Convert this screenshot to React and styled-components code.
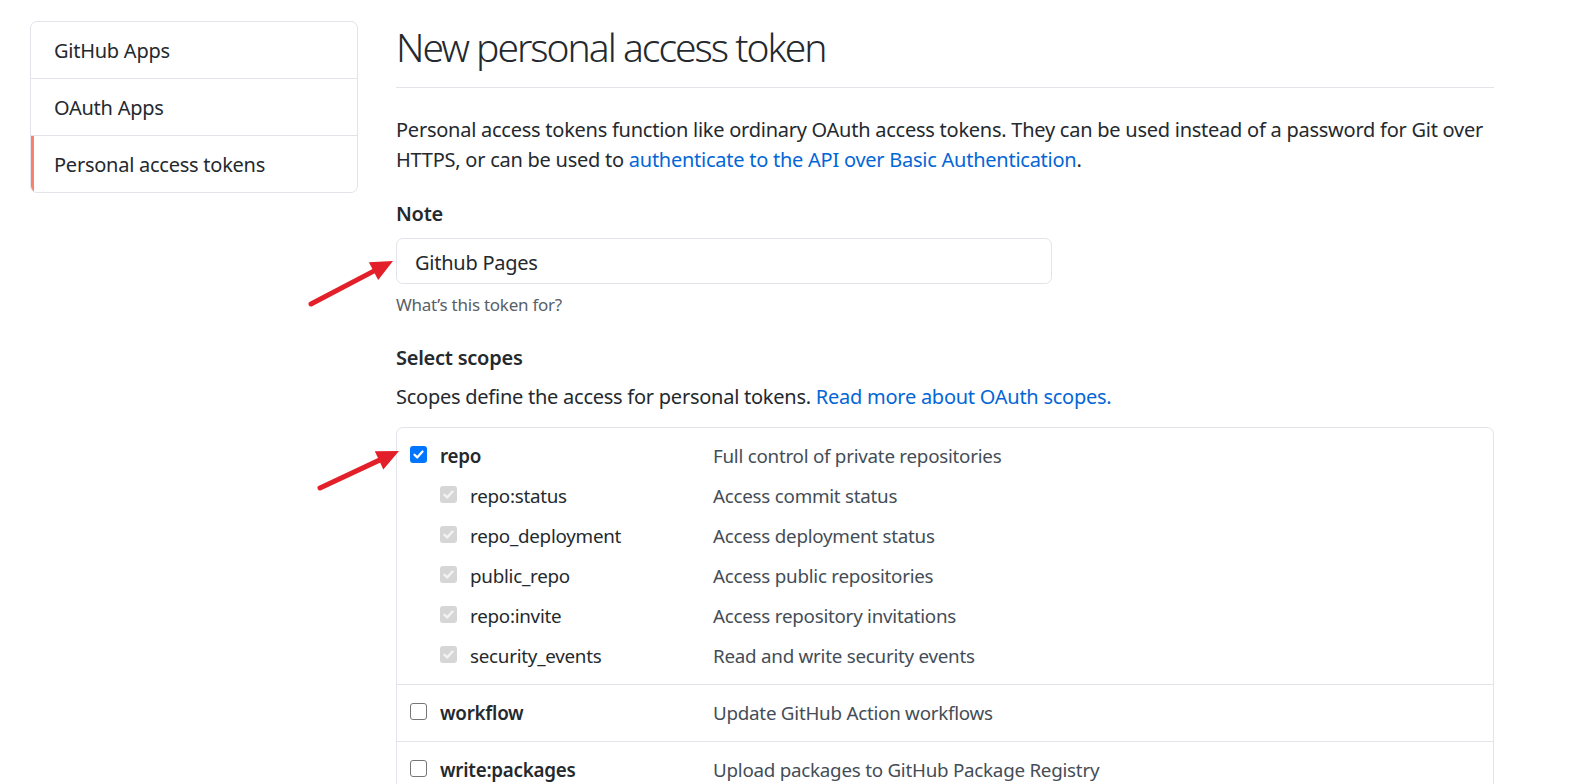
import React from 'react';
import styled, { createGlobalStyle } from 'styled-components';

const GlobalStyle = createGlobalStyle`
  body {
    margin: 0;
    background: #fff;
    color: #24292e;
    font-family: "Noto Sans", "Open Sans", sans-serif;
    font-size: 20px;
    line-height: 30px;
    letter-spacing: -0.25px;
  }
`;

const Page = styled.div`
  position: relative;
  display: flex;
  align-items: flex-start;
  gap: 38px;
  padding: 21px 0 0 30px;
  height: 763px;
  overflow: hidden;
`;

const SideNav = styled.nav`
  width: 328px;
  box-sizing: border-box;
  flex: none;
  border: 1px solid #e1e4e8;
  border-radius: 7px;
  overflow: hidden;
`;

const NavItem = styled.div`
  position: relative;
  padding: 14px 23px 12px;
  height: 30px;
  color: #24292e;
  border-top: ${p => (p.first ? 'none' : '1px solid #e1e4e8')};

  &::before {
    content: '';
    display: ${p => (p.active ? 'block' : 'none')};
    position: absolute;
    left: 0;
    top: 0;
    bottom: 0;
    width: 3px;
    background: #f9826c;
  }
`;

const Main = styled.main`
  width: 1098px;
  flex: none;
`;

const Subhead = styled.div`
  border-bottom: 1px solid #e1e4e8;
  padding-bottom: 15px;
  margin-bottom: 27px;
`;

const Heading = styled.h2`
  margin: 0;
  padding-top: 1px;
  font-size: 39px;
  line-height: 50px;
  font-weight: 300;
  letter-spacing: -2px;
`;

const Para = styled.p`
  margin: ${p => p.top || 0}px 0 0;
`;

const Link = styled.a`
  color: #0366d6;
  text-decoration: none;
`;

const Label = styled.div`
  font-weight: 600;
  margin-top: ${p => p.top}px;
`;

const Input = styled.div`
  margin-top: 9px;
  width: 656px;
  height: 46px;
  box-sizing: border-box;
  border: 1px solid #e1e4e8;
  border-radius: 7px;
  padding: 4px 18px 0;
  display: flex;
  align-items: center;
`;

const Note = styled.div`
  margin-top: 9px;
  font-size: 17px;
  line-height: 24px;
  color: #586069;
`;

const ScopeBox = styled.div`
  margin-top: 15px;
  border: 1px solid #e1e4e8;
  border-radius: 7px;
  font-size: 18.8px;
`;

const ScopeGroup = styled.div`
  padding: 13px 13px 13px;
  border-top: ${p => (p.first ? 'none' : '1px solid #e1e4e8')};
  display: flex;
  flex-direction: column;
  gap: 10px;
`;

const ScopeRow = styled.div`
  display: grid;
  grid-template-columns: 303px 1fr;
  align-items: center;
`;

const ScopeName = styled.div`
  display: flex;
  align-items: center;
  gap: 13px;
  padding-left: ${p => (p.child ? 30 : 0)}px;
  font-weight: ${p => (p.child ? 400 : 600)};
`;

const ScopeDesc = styled.div`
  color: #444d56;
`;

const Box = styled.span`
  width: 17px;
  height: 17px;
  flex: none;
  box-sizing: border-box;
  border-radius: 3px;
  display: inline-flex;
  align-items: center;
  justify-content: center;
  margin-top: -4px;
  background: ${p => (p.state === 'on' ? '#0075ff' : p.state === 'dim' ? '#d6d6d6' : '#fff')};
  border: ${p => (p.state === 'off' ? '1.5px solid #767676' : 'none')};
`;

const Arrows = styled.svg`
  position: absolute;
  left: 0;
  top: 0;
  pointer-events: none;
`;

const Checkbox = ({ state }) => (
  <Box state={state}>
    {state !== 'off' && (
      <svg width="13" height="13" viewBox="0 0 12 12">
        <path
          d="M2.3 6.2 L4.8 8.7 L9.7 3.3"
          fill="none"
          stroke={state === 'on' ? '#fff' : '#f4f4f4'}
          strokeWidth="2.1"
          strokeLinecap="round"
          strokeLinejoin="round"
        />
      </svg>
    )}
  </Box>
);

const repoChildren = [
  ['repo:status', 'Access commit status'],
  ['repo_deployment', 'Access deployment status'],
  ['public_repo', 'Access public repositories'],
  ['repo:invite', 'Access repository invitations'],
  ['security_events', 'Read and write security events'],
];

const Arrow = ({ x1, y1, x2, y2 }) => {
  const a = Math.atan2(y2 - y1, x2 - x1);
  const len = 22;
  const w = 10;
  const bx = x2 - len * Math.cos(a);
  const by = y2 - len * Math.sin(a);
  const px = -Math.sin(a) * w;
  const py = Math.cos(a) * w;
  return (
    <g>
      <line x1={x1} y1={y1} x2={bx + 4 * Math.cos(a)} y2={by + 4 * Math.sin(a)} stroke="#e3202a" strokeWidth="5" strokeLinecap="round" />
      <polygon points={`${x2},${y2} ${bx + px},${by + py} ${bx - px},${by - py}`} fill="#e3202a" />
    </g>
  );
};

const App = () => (
  <Page>
    <GlobalStyle />
    <SideNav>
      <NavItem first>GitHub Apps</NavItem>
      <NavItem>OAuth Apps</NavItem>
      <NavItem active>Personal access tokens</NavItem>
    </SideNav>
    <Main>
      <Subhead>
        <Heading>New personal access token</Heading>
      </Subhead>
      <Para>
        Personal access tokens function like ordinary OAuth access tokens. They can be used instead of a password for Git over
        HTTPS, or can be used to <Link href="#">authenticate to the API over Basic Authentication</Link>.
      </Para>
      <Label top={24}>Note</Label>
      <Input>Github Pages</Input>
      <Note>What’s this token for?</Note>
      <Label top={26}>Select scopes</Label>
      <Para top={9}>
        Scopes define the access for personal tokens. <Link href="#">Read more about OAuth scopes.</Link>
      </Para>
      <ScopeBox>
        <ScopeGroup first>
          <ScopeRow>
            <ScopeName>
              <Checkbox state="on" />
              repo
            </ScopeName>
            <ScopeDesc>Full control of private repositories</ScopeDesc>
          </ScopeRow>
          {repoChildren.map(([name, desc]) => (
            <ScopeRow key={name}>
              <ScopeName child>
                <Checkbox state="dim" />
                {name}
              </ScopeName>
              <ScopeDesc>{desc}</ScopeDesc>
            </ScopeRow>
          ))}
        </ScopeGroup>
        <ScopeGroup>
          <ScopeRow>
            <ScopeName>
              <Checkbox state="off" />
              workflow
            </ScopeName>
            <ScopeDesc>Update GitHub Action workflows</ScopeDesc>
          </ScopeRow>
        </ScopeGroup>
        <ScopeGroup>
          <ScopeRow>
            <ScopeName>
              <Checkbox state="off" />
              write:packages
            </ScopeName>
            <ScopeDesc>Upload packages to GitHub Package Registry</ScopeDesc>
          </ScopeRow>
        </ScopeGroup>
      </ScopeBox>
    </Main>
    <Arrows width="1573" height="784">
      <Arrow x1={311} y1={304} x2={393} y2={261} />
      <Arrow x1={320} y1={488} x2={399} y2={451} />
    </Arrows>
  </Page>
);

export default App;
